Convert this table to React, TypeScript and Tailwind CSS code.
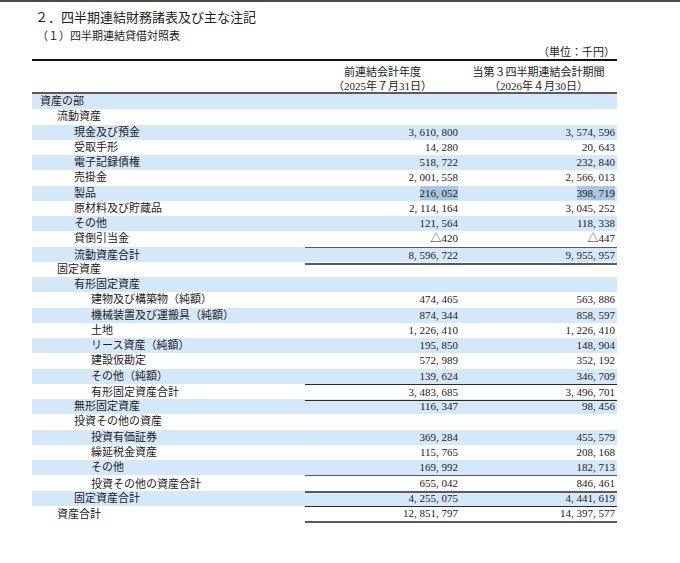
import React from 'react';

type Row = {
  label: string;
  level: number;
  prev?: string;
  curr?: string;
  top?: boolean;
  bottom?: 'thin' | 'thick';
  selected?: boolean;
};

const rows: Row[] = [
  { label: '資産の部', level: 0 },
  { label: '流動資産', level: 1 },
  { label: '現金及び預金', level: 2, prev: '3,610,800', curr: '3,574,596' },
  { label: '受取手形', level: 2, prev: '14,280', curr: '20,643' },
  { label: '電子記録債権', level: 2, prev: '518,722', curr: '232,840' },
  { label: '売掛金', level: 2, prev: '2,001,558', curr: '2,566,013' },
  { label: '製品', level: 2, prev: '216,052', curr: '398,719', selected: true },
  { label: '原材料及び貯蔵品', level: 2, prev: '2,114,164', curr: '3,045,252' },
  { label: 'その他', level: 2, prev: '121,564', curr: '118,338' },
  { label: '貸倒引当金', level: 2, prev: '△420', curr: '△447' },
  { label: '流動資産合計', level: 2, prev: '8,596,722', curr: '9,955,957', top: true, bottom: 'thick' },
  { label: '固定資産', level: 1 },
  { label: '有形固定資産', level: 2 },
  { label: '建物及び構築物（純額）', level: 3, prev: '474,465', curr: '563,886' },
  { label: '機械装置及び運搬具（純額）', level: 3, prev: '874,344', curr: '858,597' },
  { label: '土地', level: 3, prev: '1,226,410', curr: '1,226,410' },
  { label: 'リース資産（純額）', level: 3, prev: '195,850', curr: '148,904' },
  { label: '建設仮勘定', level: 3, prev: '572,989', curr: '352,192' },
  { label: 'その他（純額）', level: 3, prev: '139,624', curr: '346,709' },
  { label: '有形固定資産合計', level: 3, prev: '3,483,685', curr: '3,496,701', top: true, bottom: 'thin' },
  { label: '無形固定資産', level: 2, prev: '116,347', curr: '98,456' },
  { label: '投資その他の資産', level: 2 },
  { label: '投資有価証券', level: 3, prev: '369,284', curr: '455,579' },
  { label: '繰延税金資産', level: 3, prev: '115,765', curr: '208,168' },
  { label: 'その他', level: 3, prev: '169,992', curr: '182,713' },
  { label: '投資その他の資産合計', level: 3, prev: '655,042', curr: '846,461', top: true, bottom: 'thick' },
  { label: '固定資産合計', level: 2, prev: '4,255,075', curr: '4,441,619', bottom: 'thin' },
  { label: '資産合計', level: 1, prev: '12,851,797', curr: '14,397,577', bottom: 'thick' },
];

const indent = ['pl-[8px]', 'pl-[25px]', 'pl-[42px]', 'pl-[59px]'];

// mincho-style half-width comma: pad each comma out to a full digit width
const Amount: React.FC<{ value: string }> = ({ value }) => {
  const parts = value.split(',');
  return (
    <>
      {parts.map((p, i) => (
        <React.Fragment key={i}>
          {i > 0 && <span className="inline-block w-[0.5em] text-left">,</span>}
          {p}
        </React.Fragment>
      ))}
    </>
  );
};

const NumCell: React.FC<{ row: Row; value?: string }> = ({ row, value }) => {
  const cls = [
    'h-full flex items-center justify-end pr-[2px] box-border',
    row.top ? 'border-t border-[#2a2a2a]' : '',
    row.bottom === 'thin' ? 'border-b border-[#2a2a2a]' : '',
    row.bottom === 'thick' ? 'border-b-2 border-[#5a5a5a]' : '',
  ].join(' ');

  return (
    <div className={cls}>
      {value &&
        (row.selected ? (
          <span className="bg-[#a9c6e4] leading-[14px]">
            <Amount value={value} />
          </span>
        ) : (
          <Amount value={value} />
        ))}
    </div>
  );
};

const App: React.FC = () => {
  return (
    <div className="w-[680px] h-[563px] overflow-hidden bg-white text-[#222] font-['Liberation_Serif','Noto_Sans_CJK_JP',serif]">
      <div className="h-[2px] bg-[#4a4a4a]" />

      <div className="pl-[35px] pt-[8px] text-[13px] leading-[16px]">
        ２．四半期連結財務諸表及び主な注記
      </div>
      <div className="pl-[37px] pt-[3px] text-[11px] leading-[14px]">
        （１）四半期連結貸借対照表
      </div>

      <div className="ml-[32px] w-[585px] text-[11px]">
        <div className="mt-[2px] pr-[2px] text-right leading-[14px]">
          （単位：千円）
        </div>
        <div className="h-[2px] bg-[#111]" />

        <div className="grid grid-cols-[273px_155px_157px] h-[33px] box-border border-b-2 border-[#5a5a5a] pt-[4px] leading-[14px] text-center">
          <div />
          <div>
            <div>前連結会計年度</div>
            <div>（2025年７月31日）</div>
          </div>
          <div>
            <div>当第３四半期連結会計期間</div>
            <div>（2026年４月30日）</div>
          </div>
        </div>

        {rows.map((row, i) => (
          <div
            key={i}
            className={`grid grid-cols-[273px_155px_157px] h-[15.25px] leading-[15px] ${
              i % 2 === 0 ? 'bg-[#d5e8fa]' : 'bg-white'
            }`}
          >
            <div className={`flex items-center whitespace-nowrap ${indent[row.level]}`}>
              {row.label}
            </div>
            <NumCell row={row} value={row.prev} />
            <NumCell row={row} value={row.curr} />
          </div>
        ))}
      </div>
    </div>
  );
};

export default App;
